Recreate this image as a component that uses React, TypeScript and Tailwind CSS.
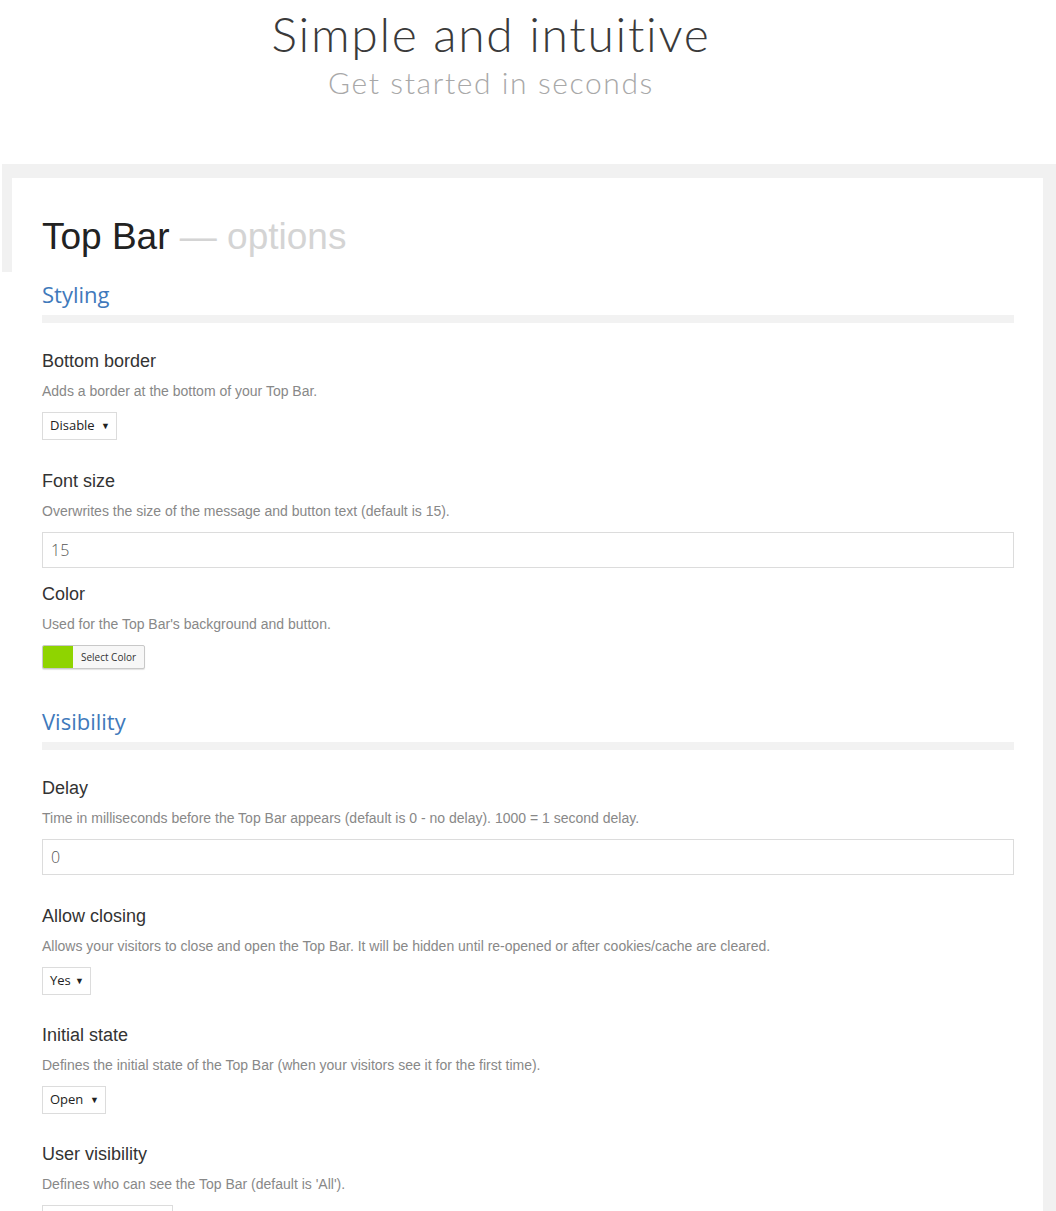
import React from 'react';

type Field = {
  label: string;
  desc: string;
  kind: 'select' | 'input' | 'color';
  value?: string;
  width?: string;
  gap?: string;
};

const STYLING: Field[] = [
  { label: 'Bottom border', desc: 'Adds a border at the bottom of your Top Bar.', kind: 'select', value: 'Disable', width: 'w-[75px]', gap: 'mb-[30px]' },
  { label: 'Font size', desc: 'Overwrites the size of the message and button text (default is 15).', kind: 'input', value: '15', gap: 'mb-[15px]' },
  { label: 'Color', desc: "Used for the Top Bar's background and button.", kind: 'color' },
];

const VISIBILITY: Field[] = [
  { label: 'Delay', desc: 'Time in milliseconds before the Top Bar appears (default is 0 - no delay). 1000 = 1 second delay.', kind: 'input', value: '0', gap: 'mb-[30px]' },
  { label: 'Allow closing', desc: 'Allows your visitors to close and open the Top Bar. It will be hidden until re-opened or after cookies/cache are cleared.', kind: 'select', value: 'Yes', width: 'w-[49px]', gap: 'mb-[29px]' },
  { label: 'Initial state', desc: 'Defines the initial state of the Top Bar (when your visitors see it for the first time).', kind: 'select', value: 'Open', width: 'w-[64px]', gap: 'mb-[29px]' },
  { label: 'User visibility', desc: "Defines who can see the Top Bar (default is 'All').", kind: 'select', value: 'All users', width: 'w-[131px]', gap: 'mb-[30px]' },
];

const Control: React.FC<{ field: Field }> = ({ field }) => {
  if (field.kind === 'select') {
    return (
      <div className={`${field.width} h-[28px] flex items-center justify-between border border-[#dcdcdc] bg-white pl-[7px] pr-[6px] text-[13px] text-[#222] font-['Open_Sans',sans-serif]`}>
        <span>{field.value}</span>
        <span className="text-[9px] text-[#222]">▼</span>
      </div>
    );
  }
  if (field.kind === 'input') {
    return (
      <div className="h-[36px] flex items-center border border-[#dcdcdc] bg-white px-[8px] text-[16px] text-[#555] font-['Open_Sans',sans-serif] font-light">
        {field.value}
      </div>
    );
  }
  return (
    <div className="w-[103px] h-[24px] flex border border-[#c8c8c8] rounded-[2px] bg-[#f7f7f7] shadow-[0_1px_1px_rgba(0,0,0,0.12)] overflow-hidden">
      <div className="w-[30px] h-full bg-[#8fd400]" />
      <div className="flex-1 flex items-center justify-center text-[10px] text-[#333] font-['Open_Sans',sans-serif]">Select Color</div>
    </div>
  );
};

const FieldRow: React.FC<{ field: Field }> = ({ field }) => (
  <div className={field.gap}>
    <div className="text-[18px] leading-[22px] text-[#333]">{field.label}</div>
    <div className="mt-[10px] text-[14px] leading-[18px] text-[#888]">{field.desc}</div>
    <div className="mt-[12px]">
      <Control field={field} />
    </div>
  </div>
);

const Section: React.FC<{ title: string; fields: Field[]; className?: string }> = ({ title, fields, className }) => (
  <div className={className}>
    <h3 className="text-[22px] leading-[28px] text-[#4079bb] font-['Open_Sans',sans-serif]">{title}</h3>
    <div className="mt-[7px] h-[8px] bg-[#f2f2f2]" />
    <div className="mt-[27px]">
      {fields.map((f) => (
        <FieldRow key={f.label} field={f} />
      ))}
    </div>
  </div>
);

export default function App() {
  return (
    <div className="min-h-screen bg-white font-['Liberation_Sans',Arial,sans-serif] overflow-hidden">
      {/* Hero heading */}
      <div className="w-[982px] pt-[4px] text-center font-['Lato',sans-serif] font-light">
        <h1 className="text-[48px] leading-[60px] text-[#3a3a3a] tracking-[1.7px]">Simple and intuitive</h1>
        <p className="text-[30px] leading-[36px] text-[#a8a8a8] tracking-[1.6px]">Get started in seconds</p>
      </div>

      {/* Options frame */}
      <div className="mt-[64px] ml-[2px] bg-[#f1f1f1] pt-[14px] pr-[13px] flex">
        <div className="w-[10px] bg-white">
          <div className="h-[94px] bg-[#f1f1f1]" />
        </div>
        <div className="flex-1 bg-white pl-[30px] pr-[29px] pt-[38px] pb-[20px]">
          <h2 className="text-[37px] leading-[42px] text-[#222]">
            Top Bar <span className="text-[#d4d4d4]">— options</span>
          </h2>
          <Section title="Styling" fields={STYLING} className="mt-[22px]" />
          <Section title="Visibility" fields={VISIBILITY} className="mt-[38px]" />
        </div>
      </div>
    </div>
  );
}
